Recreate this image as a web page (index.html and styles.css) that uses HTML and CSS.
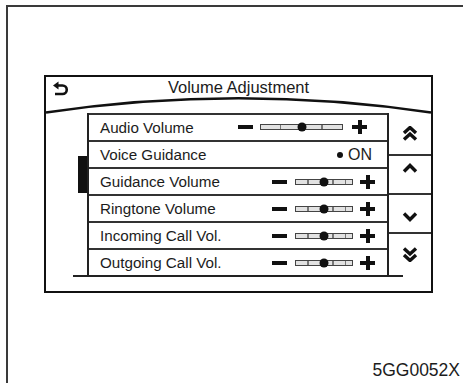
FILE: index.html
```html
<!DOCTYPE html>
<html>
<head>
<meta charset="utf-8">
<link rel="stylesheet" href="styles.css">
</head>
<body>
<div class="frame">
  <div class="screen">
    <div class="header">
      <div class="titlebar">
        <svg class="back" width="16" height="15" viewBox="0 0 16 15">
          <path d="M4 4.5 H9.5 a4.25 4.25 0 0 1 0 8.5 H2" fill="none" stroke="#111" stroke-width="2.6"/>
          <polygon points="0,4.5 5.5,0.5 5.5,8.5" fill="#111"/>
        </svg>
        <div class="title">Volume Adjustment</div>
        <div></div>
      </div>
      <svg class="curve" width="385" height="16" viewBox="0 0 385 16">
        <path d="M0 15.5 Q192.5 -13 385 15.5" fill="none" stroke="#111" stroke-width="2.6"/>
      </svg>
    </div>
    <div class="body">
      <div class="rail"><div class="thumb"></div></div>
      <div class="list">
        <div class="row">
          <span class="label">Audio Volume</span>
          <div class="ctrl ctrl-wide">
            <div class="minus"></div>
            <div class="track track-wide"><div class="knob"></div></div>
            <div class="plus"></div>
          </div>
        </div>
        <div class="row">
          <span class="label">Voice Guidance</span>
          <div class="ctrl ctrl-on"><span class="dot"></span><span class="on">ON</span></div>
        </div>
        <div class="row">
          <span class="label">Guidance Volume</span>
          <div class="ctrl">
            <div class="minus"></div>
            <div class="track"><div class="knob"></div></div>
            <div class="plus"></div>
          </div>
        </div>
        <div class="row">
          <span class="label">Ringtone Volume</span>
          <div class="ctrl">
            <div class="minus"></div>
            <div class="track"><div class="knob"></div></div>
            <div class="plus"></div>
          </div>
        </div>
        <div class="row">
          <span class="label">Incoming Call Vol.</span>
          <div class="ctrl">
            <div class="minus"></div>
            <div class="track"><div class="knob"></div></div>
            <div class="plus"></div>
          </div>
        </div>
        <div class="row">
          <span class="label">Outgoing Call Vol.</span>
          <div class="ctrl">
            <div class="minus"></div>
            <div class="track"><div class="knob"></div></div>
            <div class="plus"></div>
          </div>
        </div>
      </div>
      <div class="arrows">
        <div class="cell cell-a">
          <svg width="16" height="15" viewBox="0 0 16 15"><polyline points="2,7 8,1.5 14,7" fill="none" stroke="#111" stroke-width="3.4"/><polyline points="2,13.5 8,8 14,13.5" fill="none" stroke="#111" stroke-width="3.4"/></svg>
        </div>
        <div class="cell cell-b">
          <svg width="16" height="10" viewBox="0 0 16 10"><polyline points="2,8.5 8,2.5 14,8.5" fill="none" stroke="#111" stroke-width="3.4"/></svg>
        </div>
        <div class="cell cell-c">
          <svg width="16" height="10" viewBox="0 0 16 10"><polyline points="2,1.5 8,7.5 14,1.5" fill="none" stroke="#111" stroke-width="3.4"/></svg>
        </div>
        <div class="cell cell-d">
          <svg width="16" height="15" viewBox="0 0 16 15"><polyline points="2,1.5 8,7 14,1.5" fill="none" stroke="#111" stroke-width="3.4"/><polyline points="2,8 8,13.5 14,8" fill="none" stroke="#111" stroke-width="3.4"/></svg>
        </div>
      </div>
    </div>
    <div class="baseline"></div>
  </div>
  <div class="footer">5GG0052X</div>
</div>
</body>
</html>
```

FILE: styles.css
```css
* { box-sizing: content-box; }
html, body { margin: 0; padding: 0; background: #fff; }
body {
  width: 463px;
  height: 383px;
  overflow: hidden;
  font-family: "Liberation Sans", Arial, sans-serif;
  color: #1c1c1c;
}
.frame {
  margin: 5px 0 0 6px;
  border-top: 2px solid #3a3a3a;
  border-left: 2px solid #3a3a3a;
  height: 376px;
  display: flex;
  flex-direction: column;
}
.screen {
  margin: 68px 0 0 36px;
  width: 385px;
  border: 2px solid #111;
  padding-bottom: 14px;
}
.header { height: 36px; }
.titlebar {
  height: 20px;
  display: grid;
  grid-template-columns: 1fr auto 1fr;
  align-items: center;
}
.back { margin-left: 7px; margin-top: 3px; display: block; }
.title {
  font-size: 16.5px;
  line-height: 20px;
}
.curve { display: block; overflow: visible; }
.body { display: flex; height: 162px; }
.rail { width: 41px; display: flex; justify-content: flex-end; }
.thumb { width: 9px; height: 37px; margin-top: 43px; background: #111; }
.list {
  width: 298px;
  border-left: 2px solid #222;
  border-right: 2px solid #222;
}
.row {
  height: 25px;
  border-top: 2px solid #333;
  display: flex;
  align-items: center;
  padding-left: 11px;
}
.label { font-size: 15.2px; line-height: 25px; }
.ctrl {
  margin-left: auto;
  display: flex;
  align-items: center;
  padding-right: 12px;
}
.ctrl-wide { padding-right: 20px; margin-top: -2px; }
.ctrl-on { padding-right: 15px; }
.minus { width: 15px; height: 4px; background: #111; margin-right: 8px; }
.track {
  position: relative;
  width: 56px;
  height: 4px;
  border: 1px solid #444;
  background: repeating-linear-gradient(90deg, #e2e2e2 0, #e2e2e2 11px, #777 11px, #777 12.5px);
  margin-right: 7px;
}
.track-wide {
  width: 81px;
  background: repeating-linear-gradient(90deg, #e2e2e2 0, #e2e2e2 19px, #777 19px, #777 20.5px);
}
.ctrl-wide .minus { margin-right: 7px; }
.ctrl-wide .track { margin-right: 9px; }
.knob {
  position: absolute;
  left: 50%;
  top: 50%;
  width: 9px;
  height: 9px;
  border-radius: 50%;
  background: #111;
  transform: translate(-50%, -50%);
}
.plus { position: relative; width: 15px; height: 14px; }
.plus::before, .plus::after { content: ""; position: absolute; background: #111; }
.plus::before { left: 0; top: 5px; width: 15px; height: 4px; }
.plus::after { left: 5.5px; top: 0; width: 4px; height: 14px; }
.dot { width: 6px; height: 6px; border-radius: 50%; background: #111; margin-right: 5px; }
.on { font-size: 16px; line-height: 25px; }
.arrows { width: 42px; display: flex; flex-direction: column; }
.cell {
  display: flex;
  align-items: center;
  justify-content: center;
  box-sizing: border-box;
}
.cell svg { display: block; }
.cell-a { height: 41px; }
.cell-b { height: 39px; border-top: 2px solid #333; padding-bottom: 14px; }
.cell-c { height: 39px; border-top: 2px solid #333; padding-top: 6px; }
.cell-d { height: 43px; border-top: 2px solid #333; }
.baseline { margin-left: 27px; width: 330px; height: 2px; background: #222; }
.footer {
  margin-top: 68px;
  text-align: right;
  padding-right: 3px;
  font-size: 17.5px;
  line-height: 19px;
}
```
